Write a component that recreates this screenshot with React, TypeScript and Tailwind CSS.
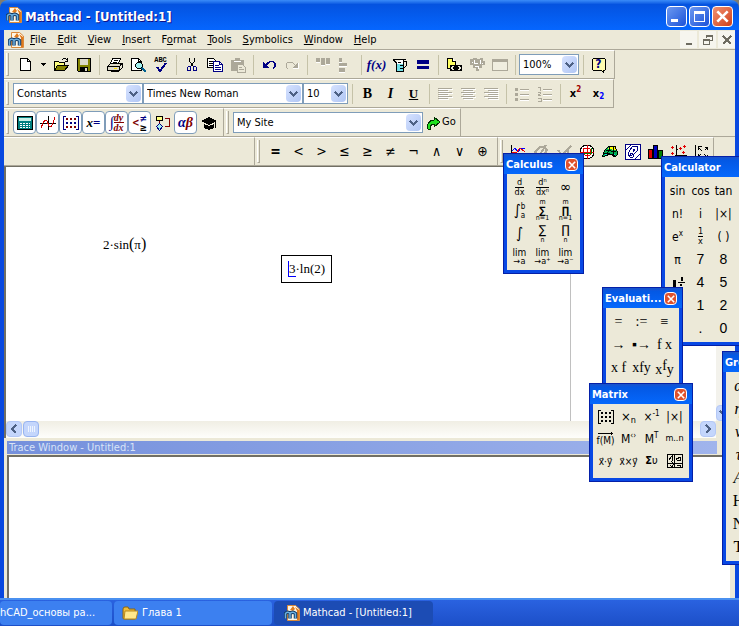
import React from "react";

const UI = "font-['DejaVu_Sans_Condensed','DejaVu_Sans',sans-serif]";
const TITLE = "font-['DejaVu_Sans_Condensed','DejaVu_Sans',sans-serif] font-bold";
const SERIF = "font-['Liberation_Serif',serif]";
const SANS = "font-['Liberation_Sans',sans-serif]";

interface SvgProps {
  w?: number;
  h?: number;
  children: React.ReactNode;
}

// 1:1 pixel drawing surface used by all toolbar icons
const Pix: React.FC<SvgProps> = ({ w = 16, h = 16, children }) => (
  <svg width={w} height={h} viewBox={`0 0 ${w} ${h}`} shapeRendering="crispEdges" fill="none" aria-hidden="true" className="shrink-0">
    {children}
  </svg>
);

const MathcadLogo: React.FC = () => (
  <svg width="16" height="16" viewBox="0 0 16 16" fill="none" aria-hidden="true" className="shrink-0">
    <path d="M3.500 .5h8l4 3.500v11.500h-12z" fill="#fff6e4" stroke="#d98a3c" />
    <path d="M6 5l3-4 2 3-2 2zM11 2l4 3v10h-2V6z" fill="#e07a1c" />
    <path d="M1.500 13.500V8.500q2.500-2.500 4.500 0v5M6 8.500q3-2.500 5.500 0v5" stroke="#123a66" strokeWidth="3.500" />
    <path d="M1.500 13.500V8.500q2.500-2.500 4.500 0v5M6 8.500q3-2.500 5.500 0v5" stroke="#6cb0e0" strokeWidth="1.500" />
  </svg>
);

const NewIcon = () => (
  <Pix>
    <path d="M2.500 1.500h7l3 3v9h-10z" fill="#fff" stroke="#000" />
    <path d="M9.500 1.500v3h3" stroke="#000" />
  </Pix>
);

const OpenIcon = () => (
  <Pix>
    <path d="M1.500 13.500v-9h4l1 1h5v3" fill="#ffff80" stroke="#000" />
    <path d="M1.500 13.500l3-5h11l-4 5z" fill="#848400" stroke="#000" />
    <path d="M9 2.500h1M10 1.500h3M13 2.500h1M14.500 1v4M12 4.500h3" stroke="#000" />
  </Pix>
);

const SaveIcon = () => (
  <Pix>
    <path d="M1 1h14v14H2l-1-1z" fill="#000" />
    <path d="M2 2h2v6h8V2h2v12H2z" fill="#848400" />
    <path d="M4 2h8v6H4z" fill="#dcd8c8" />
    <path d="M4 10h8v5H4z" fill="#000" />
    <path d="M9 11h2v3H9z" fill="#dcd8c8" />
  </Pix>
);

const PrintIcon = () => (
  <Pix>
    <path d="M5.500 1.500h8l-2 5h-8z" fill="#fff" stroke="#000" />
    <path d="M7 3.500h4M6 5.500h4" stroke="#000" />
    <path d="M3.500 6.500h11l-2 3h-12z" fill="#dcd8c8" stroke="#000" />
    <path d="M.5 9.500h12v4H.5z" fill="#dcd8c8" stroke="#000" />
    <path d="M12.500 9.500l3-3v4l-3 3M3.500 14.500h8" stroke="#000" />
    <path d="M7 11h3v1H7z" fill="#ffe000" />
  </Pix>
);

const PreviewIcon = () => (
  <Pix>
    <path d="M1.500 1.500h7l3 3v9h-10z" fill="#fff" stroke="#000" />
    <path d="M8.500 1.500v3h3" stroke="#000" />
    <path d="M7.500 5.500h3l2 2v2l-2 2h-3l-2-2v-2z" fill="#a0f0f0" stroke="#000" />
    <path d="M12 11l4 4" stroke="#006090" strokeWidth="2" />
  </Pix>
);

const SpellIcon = () => (
  <span className="flex flex-col items-center leading-none">
    <span className="font-['Liberation_Mono',monospace] text-[7px] leading-[6px] font-bold text-black">ABC</span>
    <Pix w={14} h={9}>
      <path d="M3 4l3 4 6-8" stroke="#000084" strokeWidth="2" />
    </Pix>
  </span>
);

const CutIcon = () => (
  <Pix>
    <path d="M5.500 1v3l4 6M10.500 1v3l-4 6" stroke="#000" />
    <path d="M4.500 9.500h2v4h-3v-3zM9.500 9.500h2l1 1v3h-3z" stroke="#000084" />
  </Pix>
);

const CopyIcon = () => (
  <Pix>
    <path d="M.5 1.500h6l2 2v7h-8z" fill="#fff" stroke="#000" />
    <path d="M2 4.500h4M2 6.500h4M2 8.500h4" stroke="#000" />
    <path d="M6.500 4.500h6l3 3v7h-9z" fill="#fff" stroke="#000084" />
    <path d="M8 8.500h4M8 10.500h6M8 12.500h6M12.500 4.500v3h3" stroke="#000084" />
  </Pix>
);

const PasteIcon = () => (
  <Pix>
    <path d="M1 3h13v11H1z" fill="#aca899" />
    <path d="M5 1h5v3H5z" fill="#aca899" />
    <path d="M4 4h7v1H4z" fill="#fff" />
    <path d="M7.500 7.500h5l3 3v5h-8z" fill="#ece9d8" stroke="#aca899" />
    <path d="M9 10.500h3M9 12.500h5" stroke="#aca899" />
  </Pix>
);

const UndoIcon = () => (
  <Pix>
    <path d="M2 5v6h6z" fill="#000084" />
    <path d="M5 8l2-2 2-1.500h3l2 2v3l-2 2" stroke="#000084" strokeWidth="1.500" />
  </Pix>
);

const RedoIcon = () => (
  <Pix>
    <path d="M14 5v6H8z" fill="#aca899" />
    <path d="M11 8L9 6 7 5H4L2 7v3l2 2" stroke="#aca899" />
    <path d="M14.500 6v5.500H9" stroke="#fff" />
  </Pix>
);

const AlignAcrossIcon = () => (
  <Pix>
    <path d="M1 1h4v4H1zM6 1h4v7H6zM11 1h4v6h-4z" fill="#aca899" />
    <path d="M1 5.500h4M6 8.500h4M11 7.500h4" stroke="#fff" />
  </Pix>
);

const AlignDownIcon = () => (
  <Pix>
    <path d="M1 1h3v4H1zM1 6h8v3H1zM1 11h6v4H1z" fill="#aca899" />
    <path d="M1 5.500h3M1 9.500h8M1 15.500h6" stroke="#fff" />
  </Pix>
);

const BeakerIcon = () => (
  <Pix>
    <path d="M4.500 4v10.500h7V3" fill="#fff" />
    <path d="M5 7h6v7H5z" fill="#70e0e8" />
    <path d="M1 2.500h13M1.500 3l3 3v8.500h7V3M12 4.500h2.500v4l-3 3" stroke="#000" />
    <path d="M6 5.500h3M8 8.500h3M8 11.500h3" stroke="#000" />
  </Pix>
);

const EqualIcon = () => (
  <Pix>
    <path d="M2 3h12v4H2zM2 9h12v3H2z" fill="#000084" />
  </Pix>
);

const LinkIcon = () => (
  <Pix>
    <path d="M1.500 1.500h5l3 3v7h-8z" fill="#ffff60" stroke="#000" />
    <path d="M6.500 1.500v3h3" fill="#fff" stroke="#000" />
    <path d="M5.500 8.500h3l1 1v3l-1 1h-3l-1-1v-3zM11.500 8.500h3l1 1v3l-1 1h-3l-1-1v-3z" fill="#ece9d8" stroke="#000" strokeWidth="1.500" />
    <path d="M7 11h6" stroke="#000" strokeWidth="2" />
  </Pix>
);

const ComponentIcon = () => (
  <Pix>
    <path d="M1 2h3V1h4v1h3V1h3v3h2v4h-3v3h-3v3H7v-3H4V8H1z" fill="#aca899" />
    <path d="M5.500 3v3h3M11.500 3v4M6 9.500h3v2M3 5.500h1M13 6.500h1" stroke="#fff" />
  </Pix>
);

const PanelIcon = () => (
  <Pix>
    <path d="M.5 2.500h15v11H.5z" fill="#f0eee0" stroke="#aca899" />
    <path d="M1 3h14v2H1z" fill="#aca899" />
  </Pix>
);

const HelpIcon = () => (
  <span className="relative flex">
    <Pix>
      <path d="M2.500 1.500h11l1 1v10l-1 1h-1v2l-2-2h-8l-1-1v-10z" fill="#fffcb0" stroke="#000" />
    </Pix>
    <span className="absolute inset-x-0 top-0 text-center text-[12px] leading-[15px] font-bold text-[#000084]">?</span>
  </span>
);

const LinesIcon: React.FC<{ kind: "left" | "center" | "right" }> = ({ kind }) => (
  <Pix>
    {[1, 3, 5, 7, 9, 11].map((y, i) => {
      const len = i % 2 === 0 ? 14 : 10;
      const x = kind === "left" ? 1 : kind === "center" ? (16 - len) / 2 : 15 - len;
      return (
        <g key={y}>
          <rect x={x + 1} y={y + 2} width={len} height={1} fill="#fff" />
          <rect x={x} y={y + 1} width={len} height={1} fill="#aca899" />
        </g>
      );
    })}
  </Pix>
);

const ListIcon: React.FC<{ numbered?: boolean }> = ({ numbered }) => (
  <Pix>
    <path d="M6 3.500h9M6 8.500h9M6 13.500h9" stroke="#aca899" />
    <path d="M6 4.500h9M6 9.500h9M6 14.500h9" stroke="#fff" />
    {numbered ? (
      <path d="M1 1.500h2v3M1 6.500h2v1.500l-2 1h3M1 12h3v3H1" stroke="#aca899" />
    ) : (
      <path d="M1 2h3v3H1zM1 7h3v3H1zM1 12h3v3H1z" fill="#aca899" />
    )}
  </Pix>
);

const CalculatorIcon = () => (
  <Pix>
    <path d="M.5 1.500h15v13H.5z" fill="#008080" stroke="#000" />
    <path d="M2 3h12v3H2z" fill="#c8f0e8" />
    <path d="M3 8.500h10M3 10.500h10M3 12.500h10" stroke="#fff" strokeDasharray="2 1" />
  </Pix>
);

const GraphIcon = () => (
  <Pix>
    <path d="M0 8.500h16M8.500 1v14" stroke="#000" />
    <path d="M1 13l2-5 2-3 2 1 2 5 2 1 2-4 2-6" stroke="#d00000" />
  </Pix>
);

const MatrixIcon: React.FC<{ color?: string; dot?: string }> = ({ color = "#000084", dot = "#800000" }) => (
  <Pix>
    <path d="M3 1.500H.5v13H3M13 1.500h2.500v13H13" stroke={color} />
    {[3, 7, 11].map((y) => [3, 7, 11].map((x) => <rect key={`${x}-${y}`} x={x} y={y} width={2} height={2} fill={y === 7 ? color : dot} />))}
  </Pix>
);

const FlowIcon = () => (
  <Pix>
    <path d="M1.500 1.500h6v4h-6z" fill="#ffff80" stroke="#000" />
    <path d="M4.500 6v3M10 3.500h4.500v8H10" stroke="#800000" />
    <path d="M4.500 8.500l3 3-3 4-3-4z" fill="#a0f0f0" stroke="#000084" />
  </Pix>
);

const HatIcon = () => (
  <Pix>
    <path d="M0 6l8-4 8 4-8 4zM3 9l5 2 5-2v4l-5 2-5-2z" fill="#000" />
    <path d="M14.500 7v6" stroke="#000" />
  </Pix>
);

const GoIcon = () => (
  <Pix>
    <path d="M2 14Q0 6 8 5V2l6 5-6 5V9Q4 9 4 14z" fill="#20e020" stroke="#003000" />
  </Pix>
);

const MixedNumberIcon = () => (
  <Pix>
    <path d="M3 5h3v7H3zM11 2h2v4h-2zM10 9h2v2h-2zM10 12h2v2h-2z" fill="#000" />
    <path d="M8 7.500h7" stroke="#000" />
  </Pix>
);

const PictureIcon = () => (
  <Pix>
    <path d="M.5 1.500h15v13H.5zM1 10.500h14M7.500 2v12" stroke="#000" />
    <path d="M2 7l3-4v5M9 5h2v-1h2v3h-3zM3 12l2 2 2-4M10 12h3v2M4 8l4 4" stroke="#000" />
  </Pix>
);

const plotIcons = [
  <Pix><path d="M1.500 1v13h14" stroke="#000" /><path d="M2 7l3-3 3 4 3-4 4 1" stroke="#0000ff" /><path d="M2 8l4 1 4-5 5 4" stroke="#f00000" /></Pix>,
  <Pix><path d="M2 8l5-5h4l3 3-4 6H5zM13 1L4 15" stroke="#aca899" strokeWidth="2" /></Pix>,
  <Pix><path d="M2 6l4 5 9-9M1 10h8M12 5v7" stroke="#aca899" strokeWidth="2" /></Pix>,
  <Pix><circle cx="8" cy="8" r="7" fill="#fff" stroke="#000" /><path d="M1 8.500h14M8.500 1v14" stroke="#e00000" /><path d="M4 5l3-1 4 1 1 3-1 3-3 1-4-2z" stroke="#e00000" /><path d="M3 9h9V4" stroke="#008000" /></Pix>,
  <Pix><path d="M0 13l3-7 4-4h6l3 8-3 3-4-3z" fill="#00b050" stroke="#000" /><path d="M7 3h6l1 3-8-1z" fill="#ffff00" /><path d="M2 11l4-2v2zM9 10h4v2z" fill="#00e0e0" /><path d="M2 9l6 1 5 2M4 6l10 2M8 3L5 11M12 3l-1 9" stroke="#000" /></Pix>,
  <Pix><path d="M.5.5h15v15H.5z" fill="#fff" stroke="#000084" /><path d="M7 3l5-1 1 4-4 4-1 3H5l-2-3 2-4zM8 5h2l-1 2H8zM6 9h2l-1 2H5zM1 6l5-5M10 15l5-5" stroke="#000084" /></Pix>,
  <Pix><path d="M.5 5.500h4v9h-4z" fill="#e00000" stroke="#000" /><path d="M5.500 1.500h4v13h-4z" fill="#0000c0" stroke="#000" /><path d="M10.500 6.500h4v8h-4z" fill="#008000" stroke="#000" /></Pix>,
  <Pix><path d="M5.500 1v10.500H16M5 5.500h2M9.500 11v3M13.500 11v3M2 14l3-3" stroke="#000" /><path d="M0 3.500h3M1.500 2v3M8 4.500h3M9.500 3v3M12 2.500h3M13.500 1v3M0 9.500h3M1.500 8v3M11 8.500h3M12.500 7v3" stroke="#e00000" /></Pix>,
  <Pix><path d="M1.500 1v14M4 3l4 4M4.500 6V2.500H8M14 3l-3 3M11 3.500h2.500v2M4 13l3-3M4.500 10v3.500M14 14l-4-4M13.500 11v2.500H11" stroke="#000" /></Pix>,
];

interface ToolProps {
  label: string;
  on?: boolean;
  children: React.ReactNode;
}

const Tool: React.FC<ToolProps> = ({ label, on, children }) => (
  <button
    type="button"
    aria-label={label}
    className={`flex h-[23px] w-[23px] shrink-0 items-center justify-center text-black ${on ? "rounded-sm border border-[#7f9db9] bg-white" : ""}`}
  >
    {children}
  </button>
);

const Sep = () => (
  <span className="flex w-2 shrink-0 justify-center">
    <span className="h-5 w-px bg-[#c5c2a8]" />
  </span>
);

const Grip = () => <span className="mx-0.5 h-[23px] w-[3px] shrink-0 border-r border-b border-l border-[#aca899] border-l-white" />;

const Chevron = () => (
  <Pix w={9} h={8}>
    <path d="M1 2l3.500 3.500L8 2" stroke="#4d6185" strokeWidth="2" />
  </Pix>
);

const Combo: React.FC<{ label: string; value: string; width: string }> = ({ label, value, width }) => (
  <span className={`relative block h-[21px] shrink-0 border border-[#7f9db9] bg-white ${width}`}>
    <select aria-label={label} defaultValue={value} className="block h-[19px] w-full appearance-none bg-white pr-4 pl-[3px] text-[11px] leading-[19px] text-black outline-none">
      <option>{value}</option>
    </select>
    <span className="pointer-events-none absolute top-px right-px flex h-[17px] w-[15px] items-center justify-center rounded-sm bg-linear-to-br from-[#d6e2ff] to-[#b0c6f4]">
      <Chevron />
    </span>
  </span>
);

const Bar: React.FC<{ children: React.ReactNode; className?: string }> = ({ children, className = "" }) => (
  <div className={`flex h-[29px] shrink-0 items-center border-t border-r border-b border-[#aca899] border-t-white ${className}`}>{children}</div>
);

const Cross: React.FC<{ size: number; color?: string }> = ({ size, color = "#fff" }) => (
  <svg width={size} height={size} viewBox="0 0 10 10" aria-hidden="true">
    <path d="M1 1l8 8M9 1L1 9" stroke={color} strokeWidth="2" />
  </svg>
);

interface PaletteProps {
  title: string;
  place: string;
  cols: string;
  rowHeight: string;
  closable?: boolean;
  items: React.ReactNode[];
}

const Palette: React.FC<PaletteProps> = ({ title, place, cols, rowHeight, closable = true, items }) => (
  <section
    aria-label={title}
    className={`absolute border-r-4 border-b-4 border-l-4 border-[#0848e4] bg-[#ece9d8] outline outline-[#0420a8] -outline-offset-1 ${place}`}
  >
    <header className="-mx-1 flex h-[21px] items-center justify-between bg-linear-to-b from-[#1c50c0] via-[#0458e4] via-20% to-[#0568fc] pr-1.5 pl-[3px]">
      <h2 className={`${TITLE} pt-0.5 text-[11px] leading-[19px] whitespace-nowrap text-white`}>{title}</h2>
      {closable && (
        <button type="button" aria-label={`Close ${title}`} className="mt-0.5 flex h-[13px] w-[13px] items-center justify-center rounded-sm border border-white bg-[#e0512c]">
          <Cross size={8} />
        </button>
      )}
    </header>
    <div className={`grid pt-0.5 pl-px ${cols}`}>
      {items.map((item, i) => (
        <button key={i} type="button" className={`flex w-[23px] items-center justify-center whitespace-nowrap text-black ${rowHeight}`}>
          {item}
        </button>
      ))}
    </div>
  </section>
);

const Frac: React.FC<{ top: React.ReactNode; bottom: React.ReactNode }> = ({ top, bottom }) => (
  <span className="flex flex-col items-center text-[9px] leading-[9px]">
    <span>{top}</span>
    <span className="border-t border-black">{bottom}</span>
  </span>
);

const Big: React.FC<{ sign: string; top?: string; bottom?: string }> = ({ sign, top, bottom }) => (
  <span className="flex flex-col items-center text-[7px] leading-[7px]">
    {top && <span>{top}</span>}
    <span className={top ? "text-[10px] leading-[9px] font-bold" : "text-[12px] leading-[13px]"}>{sign}</span>
    <span>{bottom}</span>
  </span>
);

const Lim: React.FC<{ to: string }> = ({ to }) => (
  <span className="flex flex-col items-center text-[10px] leading-[9px]">
    <span>lim</span>
    <span className="text-[9px]">→{to}</span>
  </span>
);

const Sup: React.FC<{ base: string; sup: string }> = ({ base, sup }) => (
  <span className="flex items-start text-[12px] leading-[16px]">
    {base}
    <span className="text-[8px] leading-[9px]">{sup}</span>
  </span>
);

const Digit: React.FC<{ children: string }> = ({ children }) => <span className={`${SANS} text-[14px]`}>{children}</span>;

const calculusItems = [
  <Frac top="d" bottom="dx" />,
  <Frac top="dⁿ" bottom="dxⁿ" />,
  <span className="text-[15px]">∞</span>,
  <span className="flex items-center text-[15px] leading-none">∫<span className="flex flex-col text-[8px] leading-[9px]"><span>b</span><span>a</span></span></span>,
  <Big sign="∑" top="m" bottom="n=1" />,
  <Big sign="∏" top="m" bottom="n=1" />,
  <span className="text-[15px] leading-none">∫</span>,
  <Big sign="∑" bottom="n" />,
  <Big sign="∏" bottom="n" />,
  <Lim to="a" />,
  <Lim to="a⁺" />,
  <Lim to="a⁻" />,
];

const calculatorItems: React.ReactNode[] = [
  "sin", "cos", "tan",
  "n!", "i", "|×|",
  <Sup base="e" sup="x" />, <Frac top="1" bottom="x" />, "( )",
  "π", <Digit>7</Digit>, <Digit>8</Digit>,
  <MixedNumberIcon />, <Digit>4</Digit>, <Digit>5</Digit>,
  "", <Digit>1</Digit>, <Digit>2</Digit>,
  "", <Digit>.</Digit>, <Digit>0</Digit>,
];

const evaluationItems = [
  "=", ":=", "≡",
  "→", "▪→", "f x",
  "x f", "xfy",
  <span className="flex leading-none"><span className="pt-1">x</span><span>f</span><span className="pt-1">y</span></span>,
];

const matrixItems = [
  <MatrixIcon color="#000" dot="#000" />,
  <span className="flex items-end text-[13px] leading-[14px]">×<span className="text-[9px] leading-[8px]">n</span></span>,
  <Sup base="×" sup="-1" />,
  <span className="text-[12px]">|×|</span>,
  <span className="flex flex-col items-center text-[10px] leading-[11px]">
    <Pix w={15} h={3}><path d="M0 1.500h15M13.500 0v3" stroke="#000" /></Pix>
    f(M)
  </span>,
  <Sup base="M" sup="‹›" />,
  <Sup base="M" sup="T" />,
  <span className="text-[9px]">m..n</span>,
  <span className="text-[10px]">x⃗·y⃗</span>,
  <span className="text-[10px]">x⃗×y⃗</span>,
  <span className="text-[11px]"><b>Σ</b>υ</span>,
  <PictureIcon />,
];

const greekItems = [<i>α</i>, <i>η</i>, <i>ν</i>, <i>τ</i>, <i>Α</i>, "Η", "Ν", "Τ"];
const booleanSigns = ["=", "<", ">", "≤", "≥", "≠", "¬", "∧", "∨", "⊕"];
const menus = ["File", "Edit", "View", "Insert", "Format", "Tools", "Symbolics", "Window", "Help"];
const menuKey: Record<string, number> = { Format: 1 };

const TitleBar = () => (
  <header className="flex h-[30px] shrink-0 items-center rounded-t-lg bg-linear-to-b from-[#3a8cf8] via-[#0453e0] via-15% to-[#0566ff] px-1.5">
    <MathcadLogo />
    <h1 className={`${TITLE} ml-[3px] flex-1 pt-1 text-[13px] whitespace-nowrap text-white [text-shadow:1px_1px_#0f1089]`}>Mathcad - [Untitled:1]</h1>
    <div className="flex gap-0.5 pt-0.5">
      <button type="button" aria-label="Minimize" className="flex h-[21px] w-[21px] items-end rounded-sm border border-white bg-linear-to-br from-[#6c98f0] to-[#1c50d8] p-1">
        <span className="h-[3px] w-[7px] bg-white" />
      </button>
      <button type="button" aria-label="Maximize" className="flex h-[21px] w-[21px] items-center justify-center rounded-sm border border-white bg-linear-to-br from-[#6c98f0] to-[#1c50d8]">
        <span className="h-[11px] w-[11px] border border-t-[3px] border-white" />
      </button>
      <button type="button" aria-label="Close" className="flex h-[21px] w-[21px] items-center justify-center rounded-sm border border-white bg-linear-to-br from-[#f09070] to-[#d03c10]">
        <Cross size={13} />
      </button>
    </div>
  </header>
);

const MenuBar = () => (
  <nav className="flex h-5 shrink-0 items-center border-b border-[#aca899] pl-1">
    <MathcadLogo />
    <div className="flex flex-1">
      {menus.map((m) => {
        const k = menuKey[m] ?? 0;
        return (
          <button key={m} type="button" className="pr-[5px] pl-1.5 text-[11px] leading-[18px] text-black">
            {m.slice(0, k)}
            <u>{m[k]}</u>
            {m.slice(k + 1)}
          </button>
        );
      })}
    </div>
    <div className="flex gap-0.5">
      {[
        <path key="m" d="M5 11h6v2H5z" fill="#6d6b60" />,
        <path key="r" d="M3.500 7.500h6v5h-6zM3 8.500h7M6.500 6V3.500h6v5H10M6 4.500h7" stroke="#6d6b60" />,
        <path key="c" d="M4 4l8 8M12 4l-8 8" stroke="#6d6b60" strokeWidth="2" />,
      ].map((p, i) => (
        <button key={i} type="button" aria-label={["Minimize sheet", "Restore sheet", "Close sheet"][i]} className="flex h-[17px] w-[17px] items-center justify-center bg-[#f6f5ee]">
          <Pix>{p}</Pix>
        </button>
      ))}
    </div>
  </nav>
);

const Toolbars = () => (
  <div className="shrink-0">
    <div className="flex">
      <Bar className="pr-1">
        <Grip />
        <span className="w-[3px]" />
        <Tool label="New"><NewIcon /></Tool>
        <button type="button" aria-label="New from template" className="flex w-3 justify-center">
          <Pix w={5} h={3}><path d="M0 0h5v1H4v1H3v1H2V2H1V1H0z" fill="#000" /></Pix>
        </button>
        <Tool label="Open"><OpenIcon /></Tool>
        <Tool label="Save"><SaveIcon /></Tool>
        <Sep />
        <Tool label="Print"><PrintIcon /></Tool>
        <Tool label="Print preview"><PreviewIcon /></Tool>
        <Tool label="Check spelling"><SpellIcon /></Tool>
        <Sep />
        <Tool label="Cut"><CutIcon /></Tool>
        <Tool label="Copy"><CopyIcon /></Tool>
        <Tool label="Paste"><PasteIcon /></Tool>
        <Sep />
        <Tool label="Undo"><UndoIcon /></Tool>
        <Tool label="Redo"><RedoIcon /></Tool>
        <Sep />
        <Tool label="Align across"><AlignAcrossIcon /></Tool>
        <Tool label="Align down"><AlignDownIcon /></Tool>
        <Sep />
        <Tool label="Insert function"><span className={`${SERIF} text-[13px] font-bold text-[#000084] italic`}>f(x)</span></Tool>
        <Tool label="Insert unit"><BeakerIcon /></Tool>
        <Tool label="Calculate"><EqualIcon /></Tool>
        <Sep />
        <Tool label="Insert hyperlink"><LinkIcon /></Tool>
        <Tool label="Component wizard"><ComponentIcon /></Tool>
        <Tool label="Run math connex"><PanelIcon /></Tool>
        <Sep />
        <Combo label="Zoom" value="100%" width="w-[60px]" />
        <Sep />
        <Tool label="Help"><HelpIcon /></Tool>
      </Bar>
    </div>
    <div className="flex">
      <Bar className="pr-[3px]">
        <Grip />
        <span className="w-0.5" />
        <Combo label="Style" value="Constants" width="w-[130px]" />
        <Combo label="Font" value="Times New Roman" width="w-[160px]" />
        <Combo label="Font size" value="10" width="w-[45px]" />
        <Sep />
        <Tool label="Bold"><span className={`${SERIF} text-[14px] font-bold`}>B</span></Tool>
        <Tool label="Italic"><span className={`${SERIF} text-[14px] font-bold italic`}>I</span></Tool>
        <Tool label="Underline"><span className={`${SERIF} text-[13px] font-bold underline`}>U</span></Tool>
        <Sep />
        <Tool label="Align left"><LinesIcon kind="left" /></Tool>
        <Tool label="Align center"><LinesIcon kind="center" /></Tool>
        <Tool label="Align right"><LinesIcon kind="right" /></Tool>
        <Sep />
        <Tool label="Bullets"><ListIcon /></Tool>
        <Tool label="Numbering"><ListIcon numbered /></Tool>
        <Sep />
        <Tool label="Superscript">
          <span className="flex items-start text-[11px] leading-[16px] font-bold">x<span className="text-[8px] leading-[8px] text-[#a00000]">2</span></span>
        </Tool>
        <Tool label="Subscript">
          <span className="flex items-end text-[11px] leading-[14px] font-bold">x<span className="text-[8px] leading-[8px] text-[#0000ff]">2</span></span>
        </Tool>
      </Bar>
    </div>
    <div className="flex">
      <Bar className="pr-[3px]">
        <Grip />
        <span className="w-0.5" />
        <Tool label="Calculator toolbar" on><CalculatorIcon /></Tool>
        <Tool label="Graph toolbar" on><GraphIcon /></Tool>
        <Tool label="Matrix toolbar" on><MatrixIcon /></Tool>
        <Tool label="Evaluation toolbar" on><span className={`${SERIF} text-[13px] font-bold`}><i>x</i><span className="text-[#000084]">=</span></span></Tool>
        <Tool label="Calculus toolbar" on>
          <span className={`${SERIF} flex items-center text-[15px] leading-none font-bold text-[#000084]`}>
            ∫<span className="flex flex-col text-[10px] leading-[9px] text-[#800000] italic"><span className="border-b border-[#800000]">dy</span><span>dx</span></span>
          </span>
        </Tool>
        <Tool label="Boolean toolbar" on>
          <span className="flex items-center text-[10px] leading-none font-bold"><span className="text-[#800000]">&lt;</span><span className="flex flex-col leading-[9px]"><span className="text-[#000084]">≠</span><span>≥</span></span></span>
        </Tool>
        <Tool label="Programming toolbar"><FlowIcon /></Tool>
        <Tool label="Greek toolbar" on><span className={`${SERIF} text-[14px] font-bold text-[#000084] italic`}>α<span className="text-[#800000]">β</span></span></Tool>
        <Tool label="Symbolic toolbar"><HatIcon /></Tool>
      </Bar>
      <Bar className="pr-1">
        <Grip />
        <span className="w-0.5" />
        <Combo label="Resource" value="My Site" width="w-[190px]" />
        <button type="button" className="flex items-center pl-[3px] text-[11px] text-black"><GoIcon />Go</button>
      </Bar>
      <div className="h-[29px] flex-1 border-b border-[#aca899]" />
    </div>
    <div className="flex border-b border-[#716f64]">
      <Bar className="w-[251px]"><span /></Bar>
      <Bar className="pr-[3px]">
        <Grip />
        <span className="w-0.5" />
        {booleanSigns.map((s) => (
          <Tool key={s} label={`Boolean ${s}`}><span className={s === "=" ? "text-[14px] font-bold" : "text-[14px]"}>{s}</span></Tool>
        ))}
      </Bar>
      <Bar>
        <Grip />
        <span className="w-px" />
        {plotIcons.map((icon, i) => (
          <Tool key={i} label={`Plot ${i + 1}`}>{icon}</Tool>
        ))}
      </Bar>
    </div>
  </div>
);

const ScrollButton: React.FC<{ label: string; d: string }> = ({ label, d }) => (
  <button type="button" aria-label={label} className="flex h-4 w-4 shrink-0 items-center justify-center rounded-sm border border-[#b4c8f6] bg-[#c4d6fc]">
    <Pix w={10} h={10}><path d={d} stroke="#4d6185" strokeWidth="2" /></Pix>
  </button>
);

const Worksheet = () => (
  <div className="flex h-[271px] shrink-0 flex-col border-l-2 border-[#716f64] bg-white">
    <div className="flex min-h-0 flex-1">
      <main className="flex w-[565px] shrink-0 border-r border-[#c0c0c0] text-black">
        <p className={`${SERIF} ml-[97px] w-[43px] pt-[68px] text-[13px] leading-[18px] whitespace-nowrap`}>
          2·sin<span className="text-[16px]">(</span>π<span className="text-[16px]">)</span>
        </p>
        <p className={`${SERIF} mt-[88px] ml-[135px] h-7 border border-black px-1.5 text-[13px] leading-[26px]`}>
          <span className="border-b border-l border-[#0000ff]">3</span>·ln(2)
        </p>
      </main>
      <div className="flex-1" />
      <div className="flex w-[19px] flex-col justify-end bg-[#f3f2ec]">
        <ScrollButton label="Scroll down" d="M1 3l4 4 4-4" />
      </div>
    </div>
    <div className="flex h-[17px] bg-linear-to-b from-[#f0eee4] to-[#fefefb]">
      <ScrollButton label="Scroll left" d="M7 1L3 5l4 4" />
      <span className="ml-px flex h-4 w-4 items-center justify-center gap-px rounded-sm border border-[#98b4f0] bg-[#c4d6fc]">
        {[0, 1, 2, 3].map((n) => <span key={n} className="h-1.5 w-px bg-[#eef4fe]" />)}
      </span>
      <span className="flex-1" />
      <ScrollButton label="Scroll right" d="M3 1l4 4-4 4" />
      <span className="w-[19px] bg-[#ece9d8]" />
    </div>
  </div>
);

const TaskButton: React.FC<{ className: string; children: React.ReactNode }> = ({ className, children }) => (
  <button type="button" className={`flex h-6 items-center overflow-hidden rounded-sm text-[11px] whitespace-nowrap text-white ${className}`}>
    {children}
  </button>
);

const App: React.FC = () => (
  <div className={`${UI} relative flex min-h-screen flex-col overflow-hidden bg-[#807c70]`}>
    <div className="flex flex-1 flex-col">
      <TitleBar />
      <div className="flex flex-1 flex-col border-r-4 border-l-4 border-[#0848e0] bg-[#ece9d8]">
        <MenuBar />
        <Toolbars />
        <Worksheet />
        <section className="mt-[3px] flex flex-1 flex-col pr-[5px] pl-[3px]">
          <h2 className="mr-[13px] h-[13px] bg-linear-to-r from-[#7590dc] to-[#a0b4ec] pl-0.5 text-[11px] leading-[13px] text-[#d8e4f8]">Trace Window - Untitled:1</h2>
          <textarea aria-label="Trace output" className="mt-px w-full flex-1 resize-none border-t-2 border-l-2 border-[#716f64] bg-white outline-none" />
        </section>
      </div>
    </div>

    <Palette title="Calculus" place="left-[503px] top-[153px] w-[81px] h-[121px]" cols="grid-cols-[23px_23px_23px]" rowHeight="h-[23px]" items={calculusItems} />
    <Palette title="Calculator" place="left-[661px] top-[156px] w-[124px] h-[190px] text-[12px]" cols="grid-cols-[23px_23px_23px]" rowHeight="h-[23px]" closable={false} items={calculatorItems} />
    <Palette title="Evaluati..." place="left-[602px] top-[287px] w-[81px] h-[100px] text-[14px]" cols="grid-cols-[23px_23px_23px]" rowHeight="h-[23px] font-['Liberation_Serif',serif]" items={evaluationItems} />
    <Palette title="Matrix" place="left-[589px] top-[383px] w-[104px] h-[99px] text-[11px]" cols="grid-cols-[23px_23px_23px_23px]" rowHeight="h-[22px]" items={matrixItems} />
    <Palette title="Greek" place="left-[722px] top-[351px] w-[146px] h-[214px] text-[16px]" cols="grid-cols-[23px]" rowHeight="h-[23px] font-['Liberation_Serif',serif]" closable={false} items={greekItems} />

    <footer className="relative flex h-7 shrink-0 items-center gap-0.5 border-t-2 border-[#4a90f0] bg-linear-to-b from-[#2a62e0] to-[#1c4fc8]">
      <TaskButton className="w-28 bg-[#3c80f0]">hCAD_основы ра...</TaskButton>
      <TaskButton className="w-[158px] gap-1 bg-[#3c80f0] pl-2">
        <svg width="16" height="16" viewBox="0 0 16 16" aria-hidden="true">
          <path d="M1 4q0-2 2-2h3l1 2h6v10H2q-1 0-1-1z" fill="#f0bc38" stroke="#8a6410" />
          <path d="M3 6h13l-2 8H2z" fill="#ffe88c" stroke="#b8881c" />
        </svg>
        Глава 1
      </TaskButton>
      <TaskButton className="w-[159px] gap-[3px] bg-[#1c4cb4] pl-2.5">
        <MathcadLogo />
        Mathcad - [Untitled:1]
      </TaskButton>
    </footer>
  </div>
);

export default App;
